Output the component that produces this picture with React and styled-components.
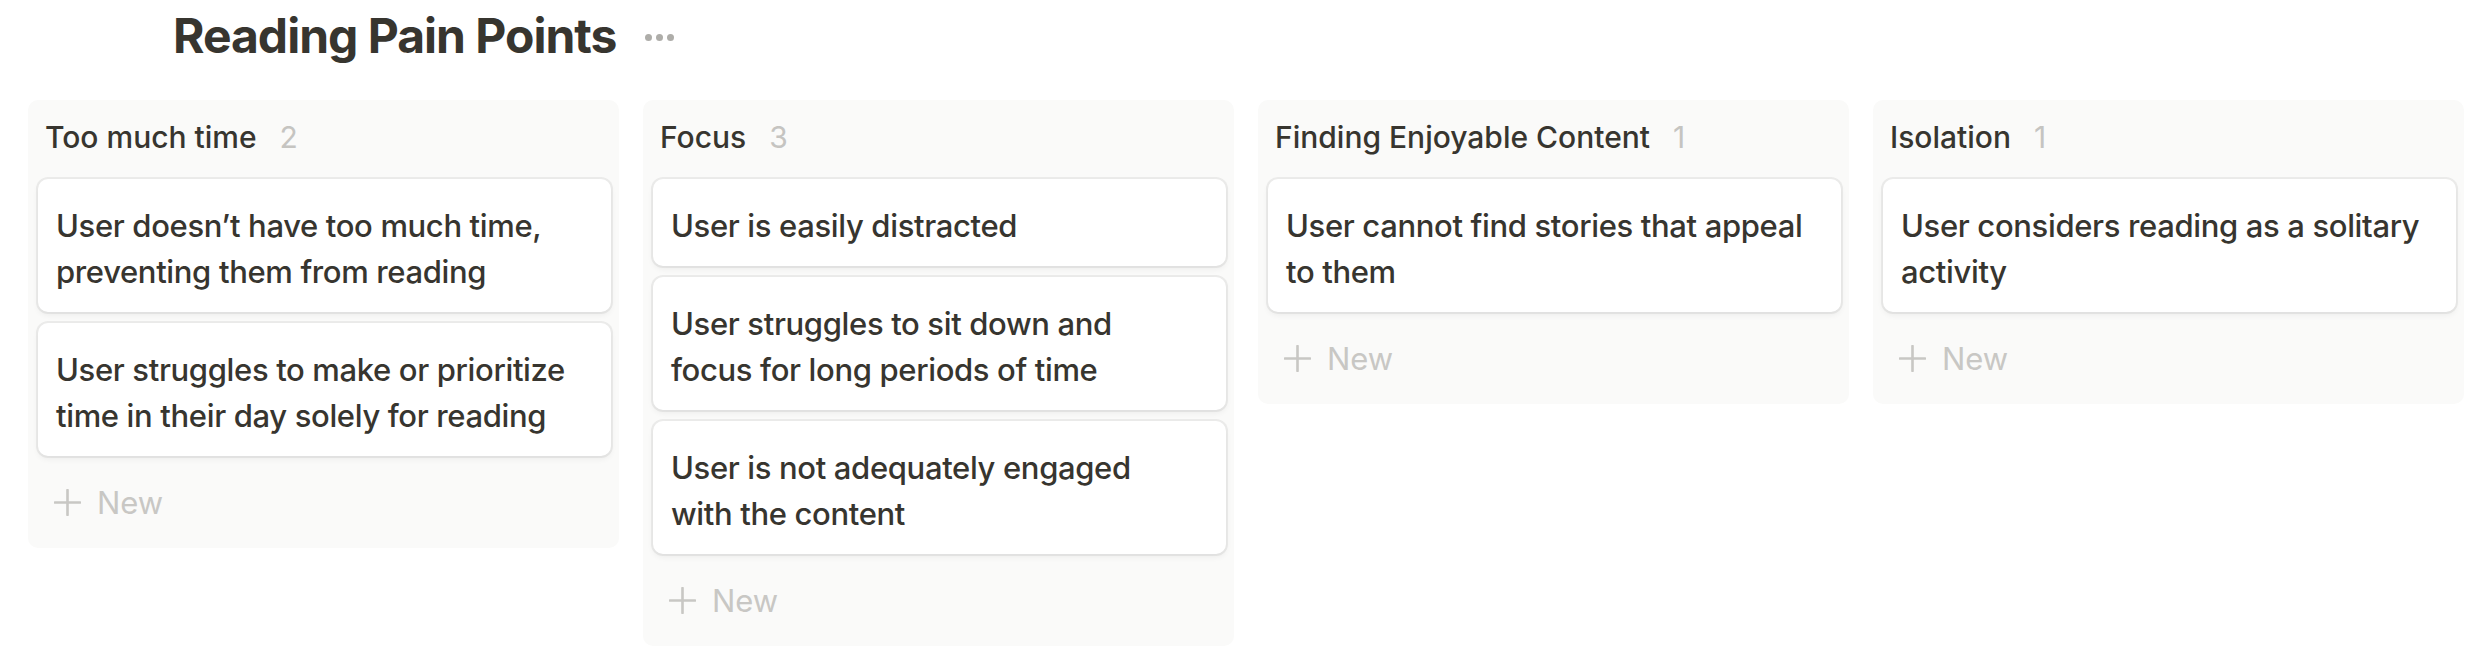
import React from "react";
import styled, { createGlobalStyle } from "styled-components";

const Global = createGlobalStyle`
  html, body { margin: 0; padding: 0; background: #ffffff; }
  body { font-family: Inter, "Noto Sans", "Liberation Sans", sans-serif; color: #37352f; -webkit-font-smoothing: antialiased; }
  * { box-sizing: border-box; }
`;

const Page = styled.div`
  width: 2488px;
  height: 658px;
  overflow: hidden;
  background: #ffffff;
`;

const TitleRow = styled.div`
  display: flex;
  align-items: flex-start;
  gap: 29px;
  padding: 8px 0 0 173px;
  height: 100px;
`;

const Title = styled.h1`
  margin: 0;
  font-size: 48px;
  line-height: 56px;
  font-weight: 700;
  letter-spacing: -1px;
  color: #37352f;
`;

const MoreButton = styled.div`
  display: flex;
  align-items: center;
  gap: 4px;
  height: 56px;
  padding-top: 2px;
`;

const Dot = styled.span`
  width: 7px;
  height: 7px;
  border-radius: 50%;
  background: #aeada9;
`;

const Board = styled.div`
  display: flex;
  align-items: flex-start;
  gap: 24px;
  padding-left: 28px;
`;

const Column = styled.section`
  width: 591px;
  flex: none;
  background: #fafaf9;
  border-radius: 10px;
  padding: 0 8px 11px 10px;
`;

const GroupHeader = styled.div`
  display: flex;
  align-items: baseline;
  padding: 17px 0 0 7px;
  margin-bottom: 22px;
  font-size: 30px;
  line-height: 40px;
  font-weight: 500;
`;

const GroupName = styled.span`
  color: #37352f;
`;

const Count = styled.span`
  margin-left: 23px;
  color: #c5c4c1;
  font-weight: 400;
`;

const Cards = styled.div`
  display: flex;
  flex-direction: column;
  gap: 11px;
`;

const Card = styled.div`
  background: #ffffff;
  border-radius: 10px;
  padding: 24px 30px 17px 18px;
  font-size: 31px;
  line-height: 46px;
  font-weight: 500;
  color: #37352f;
  letter-spacing: -0.35px;
  box-shadow: 0 0 0 2px rgba(15, 15, 15, 0.06), 0 3px 6px rgba(15, 15, 15, 0.06);
`;

const NewRow = styled.div`
  display: flex;
  align-items: center;
  gap: 16px;
  height: 70px;
  padding-left: 16px;
  font-size: 31px;
  color: #c8c7c4;
`;

const PlusIcon = () => (
  <svg width="27" height="27" viewBox="0 0 27 27" fill="none">
    <path d="M13.5 1v25M1 13.5h25" stroke="#c8c7c4" strokeWidth="2.6" strokeLinecap="round" />
  </svg>
);

const groups = [
  {
    name: "Too much time",
    items: [
      "User doesn\u2019t have too much time, preventing them from reading",
      "User struggles to make or prioritize time in their day solely for reading",
    ],
  },
  {
    name: "Focus",
    items: [
      "User is easily distracted",
      "User struggles to sit down and focus for long periods of time",
      "User is not adequately engaged with the content",
    ],
  },
  {
    name: "Finding Enjoyable Content",
    items: ["User cannot find stories that appeal to them"],
  },
  {
    name: "Isolation",
    items: ["User considers reading as a solitary activity"],
  },
];

export default function App() {
  return (
    <Page>
      <Global />
      <TitleRow>
        <Title>Reading Pain Points</Title>
        <MoreButton>
          <Dot />
          <Dot />
          <Dot />
        </MoreButton>
      </TitleRow>
      <Board>
        {groups.map((g) => (
          <Column key={g.name}>
            <GroupHeader>
              <GroupName>{g.name}</GroupName>
              <Count>{g.items.length}</Count>
            </GroupHeader>
            <Cards>
              {g.items.map((t) => (
                <Card key={t}>{t}</Card>
              ))}
              <NewRow>
                <PlusIcon />
                New
              </NewRow>
            </Cards>
          </Column>
        ))}
      </Board>
    </Page>
  );
}
